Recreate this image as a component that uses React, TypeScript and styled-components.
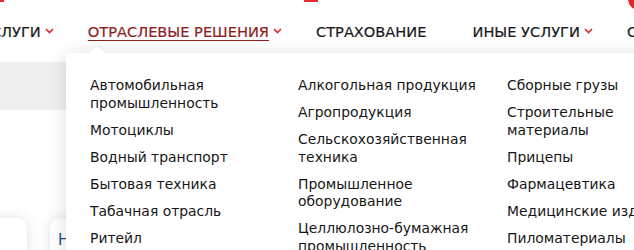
import * as React from "react";
import styled, { createGlobalStyle } from "styled-components";

const GlobalStyle = createGlobalStyle`
  html, body {
    margin: 0;
    padding: 0;
    background: #ffffff;
  }
  body {
    font-family: "DejaVu Sans", "Open Sans", sans-serif;
    color: #1d1d1b;
  }
`;

const Page = styled("div")`
  position: relative;
  width: 634px;
  height: 250px;
  overflow: hidden;
  background: #ffffff;
`;

const TopStrip = styled("div")`
  display: flex;
  height: 2px;
`;

interface MarkProps {
  readonly offset: number;
  readonly size: number;
}

const Mark = styled("div")<MarkProps>`
  margin-left: ${({ offset }) => offset}px;
  width: ${({ size }) => size}px;
  height: 2px;
  background: #e52b2b;
`;

const RoundButton = styled("div")`
  position: absolute;
  top: -12px;
  left: 628px;
  width: 22px;
  height: 22px;
  border-radius: 50%;
  background: #e3262b;
`;

const Nav = styled("nav")`
  display: flex;
  align-items: center;
  height: 58px;
  margin-left: -18px;
  gap: 34px;
  white-space: nowrap;
`;

interface NavItemProps {
  readonly active?: boolean;
  readonly spaced?: boolean;
}

const NavItem = styled("div")<NavItemProps>`
  display: flex;
  align-items: center;
  margin-left: ${({ spaced }) => (spaced ? "12px" : "0")};
  font-size: 14.6px;
  text-transform: uppercase;
  color: ${({ active }) => (active ? "#8e1f1f" : "#1a1a1a")};
  -webkit-text-stroke: 0.2px currentColor;

  span {
    text-decoration: ${({ active }) => (active ? "underline" : "none")};
    text-underline-offset: 3px;
    text-decoration-thickness: 1px;
  }

  svg {
    width: 9px;
    height: 6px;
    margin-left: 4px;
  }
`;

const GreyBand = styled("div")`
  height: 48px;
  margin-top: 2px;
  background: #efefef;
`;

const Cards = styled("div")`
  display: flex;
  gap: 23px;
  margin-top: 108px;
  margin-left: -40px;
`;

interface CardProps {
  readonly w: number;
}

const Card = styled("div")<CardProps>`
  width: ${({ w }) => w}px;
  height: 60px;
  border-radius: 10px;
  background: #ffffff;
  box-shadow: 0 0 14px rgba(0, 0, 0, 0.12);
  padding: 13px 8px;
  box-sizing: border-box;
  font-size: 15px;
  color: #20508f;
`;

const Dropdown = styled("div")`
  position: absolute;
  top: 53px;
  left: 66px;
  width: 640px;
  height: 260px;
  background: #ffffff;
  box-shadow: 0 2px 18px rgba(0, 0, 0, 0.13);
  padding: 24px 0 0 24px;
  box-sizing: border-box;

  &::before {
    content: "";
    position: absolute;
    top: -7px;
    left: 23px;
    border-left: 8px solid transparent;
    border-right: 8px solid transparent;
    border-bottom: 7px solid #ffffff;
    filter: drop-shadow(0 -2px 2px rgba(0, 0, 0, 0.05));
  }
`;

const Columns = styled("div")`
  display: grid;
  grid-template-columns: 208px 209px 208px;
`;

const Column = styled("ul")`
  list-style: none;
  margin: 0;
  padding: 0;
  display: flex;
  flex-direction: column;
  gap: 9.5px;
`;

const Item = styled("li")`
  font-size: 13.9px;
  line-height: 17.5px;
  color: #161616;
  white-space: pre-line;
`;

const Chevron = () => (
  <svg viewBox="0 0 9 6" fill="none">
    <path d="M1 1l3.5 3.5L8 1" stroke="#e3262b" strokeWidth="1.6" />
  </svg>
);

const columns: string[][] = [
  [
    "Автомобильная\nпромышленность",
    "Мотоциклы",
    "Водный транспорт",
    "Бытовая техника",
    "Табачная отрасль",
    "Ритейл",
  ],
  [
    "Алкогольная продукция",
    "Агропродукция",
    "Сельскохозяйственная\nтехника",
    "Промышленное\nоборудование",
    "Целлюлозно-бумажная\nпромышленность",
  ],
  [
    "Сборные грузы",
    "Строительные\nматериалы",
    "Прицепы",
    "Фармацевтика",
    "Медицинские изделия",
    "Пиломатериалы",
  ],
];

export default function App(): JSX.Element {
  return (
    <Page>
      <GlobalStyle />
      <TopStrip>
        <Mark offset={0} size={4} />
        <Mark offset={300} size={14} />
      </TopStrip>
      <RoundButton />
      <Nav>
        <NavItem>
          <span>Услуги</span>
          <Chevron />
        </NavItem>
        <NavItem active>
          <span>Отраслевые решения</span>
          <Chevron />
        </NavItem>
        <NavItem>
          <span>Страхование</span>
        </NavItem>
        <NavItem spaced>
          <span>Иные услуги</span>
          <Chevron />
        </NavItem>
        <NavItem>
          <span>Сервис</span>
        </NavItem>
      </Nav>
      <GreyBand />
      <Cards>
        <Card w={67} />
        <Card w={200}>Н</Card>
      </Cards>
      <Dropdown>
        <Columns>
          {columns.map((col, i) => (
            <Column key={i}>
              {col.map((text) => (
                <Item key={text}>{text}</Item>
              ))}
            </Column>
          ))}
        </Columns>
      </Dropdown>
    </Page>
  );
}
